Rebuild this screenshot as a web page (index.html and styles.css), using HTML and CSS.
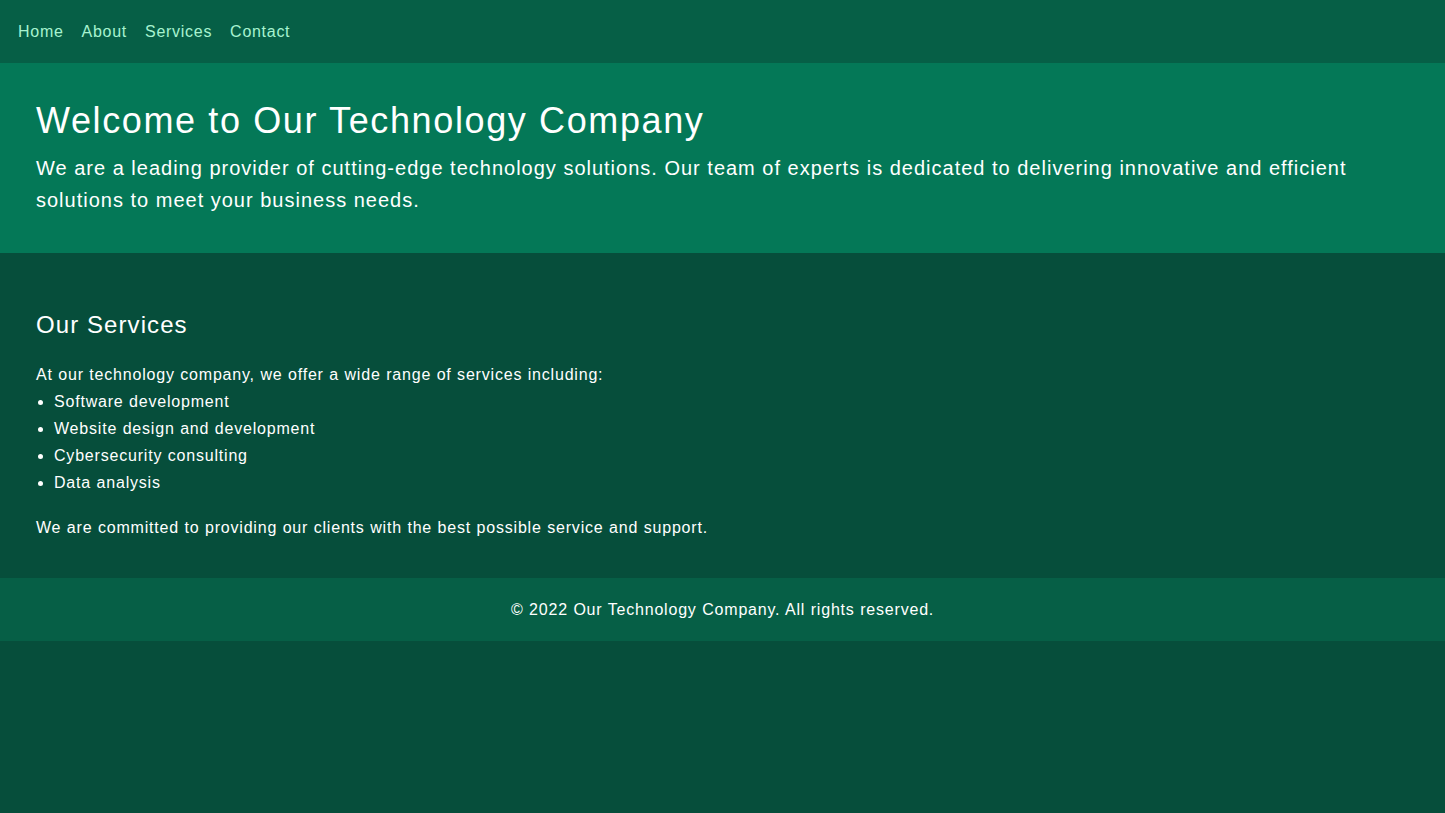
FILE: index.html
```html
<!DOCTYPE html>
<html lang="en">
<head>
<meta charset="utf-8">
<title>Our Technology Company</title>
<link rel="stylesheet" href="styles.css">
</head>
<body>
<nav class="nav">
  <a class="nav-link" href="#">Home</a>
  <a class="nav-link" href="#">About</a>
  <a class="nav-link" href="#">Services</a>
  <a class="nav-link" href="#">Contact</a>
</nav>
<header class="hero">
  <h1 class="hero-title">Welcome to Our Technology Company</h1>
  <p class="hero-text">We are a leading provider of cutting-edge technology solutions. Our team of experts is dedicated to delivering innovative and efficient solutions to meet your business needs.</p>
</header>
<main class="services">
  <h2 class="services-title">Our Services</h2>
  <p class="text">At our technology company, we offer a wide range of services including:</p>
  <ul class="list">
    <li>Software development</li>
    <li>Website design and development</li>
    <li>Cybersecurity consulting</li>
    <li>Data analysis</li>
  </ul>
  <p class="text closing">We are committed to providing our clients with the best possible service and support.</p>
</main>
<footer class="footer">
  <p class="footer-text">© 2022 Our Technology Company. All rights reserved.</p>
</footer>
</body>
</html>
```
FILE: styles.css
```css
html, body {
  margin: 0;
  padding: 0;
}
body {
  background: #064e3b;
  color: #ffffff;
  font-family: "Liberation Sans", Arial, sans-serif;
  min-height: 813px;
}
.nav {
  background: #065f46;
  height: 63px;
  display: flex;
  align-items: center;
  gap: 18px;
  padding: 0 18px;
  box-sizing: border-box;
}
.nav-link {
  color: #a7f3d0;
  text-decoration: none;
  font-size: 16px;
  line-height: 24px;
  letter-spacing: 0.045em;
}
.hero {
  background: #047857;
  padding: 38px 36px 37px;
}
.hero-title {
  margin: 0 0 11px;
  font-size: 36px;
  line-height: 40px;
  font-weight: 400;
  letter-spacing: 0.045em;
}
.hero-text {
  margin: 0;
  font-size: 20px;
  line-height: 32px;
  letter-spacing: 0.05em;
}
.services {
  padding: 56px 36px 37px;
}
.services-title {
  margin: 0 0 20px;
  font-size: 24px;
  line-height: 32px;
  font-weight: 400;
  letter-spacing: 0.045em;
}
.text {
  margin: 0;
  font-size: 16px;
  line-height: 27px;
  letter-spacing: 0.05em;
  word-spacing: 0.3px;
}
.list {
  margin: 0;
  padding-left: 18px;
  font-size: 16px;
  line-height: 27px;
  letter-spacing: 0.05em;
  word-spacing: 0.3px;
}
.closing {
  margin-top: 18px;
}
.footer {
  background: #065f46;
  height: 63px;
  display: flex;
  align-items: center;
  justify-content: center;
}
.footer-text {
  margin: 0;
  font-size: 16px;
  line-height: 24px;
  letter-spacing: 0.05em;
  word-spacing: 0.3px;
}
```
